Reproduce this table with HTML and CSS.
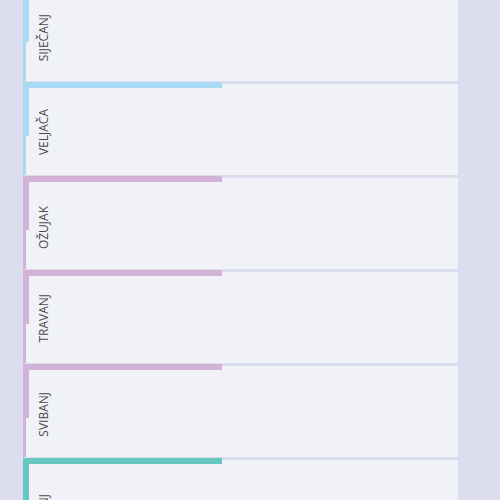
FILE: index.html
```html
<!DOCTYPE html>
<html lang="hr">
<head>
<meta charset="utf-8">
<title>Mjeseci</title>
<link rel="stylesheet" href="styles.css">
</head>
<body>
<div class="panel">
  <div class="month blue"><span class="label">Siječanj</span></div>
  <div class="month blue"><span class="label">Veljača</span></div>
  <div class="month purple"><span class="label">Ožujak</span></div>
  <div class="month purple"><span class="label">Travanj</span></div>
  <div class="month purple"><span class="label">Svibanj</span></div>
  <div class="month teal"><span class="label">Lipanj</span></div>
</div>
</body>
</html>
```
FILE: styles.css
```css
html, body {
  margin: 0;
  padding: 0;
  background: #dcdef0;
  height: 100%;
  overflow: hidden;
}
.panel {
  margin-top: -13px;
  margin-left: 23px;
  width: 435px;
  background: #f1f2f8;
  display: flex;
  flex-direction: column;
}
.month {
  position: relative;
  box-sizing: border-box;
  height: 94px;
  border-top: 3px solid #dcdcef;
  border-left: 3px solid var(--c);
  padding: 0 0 20px 10px;
  display: flex;
  align-items: flex-end;
}
.month::before {
  content: "";
  position: absolute;
  left: -3px;
  top: -2px;
  width: 199px;
  height: 6px;
  background: var(--c);
}
.month::after {
  content: "";
  position: absolute;
  left: -3px;
  top: -2px;
  width: 6px;
  height: 54px;
  background: var(--c);
}
.blue { --c: #a6dbf3; }
.purple { --c: #d3b2d7; }
.teal { --c: #66c8c1; }
.label {
  writing-mode: vertical-rl;
  transform: rotate(180deg);
  font-family: "Open Sans", sans-serif;
  font-size: 12px;
  line-height: 16px;
  text-transform: uppercase;
  color: #4a4a4a;
}
```
